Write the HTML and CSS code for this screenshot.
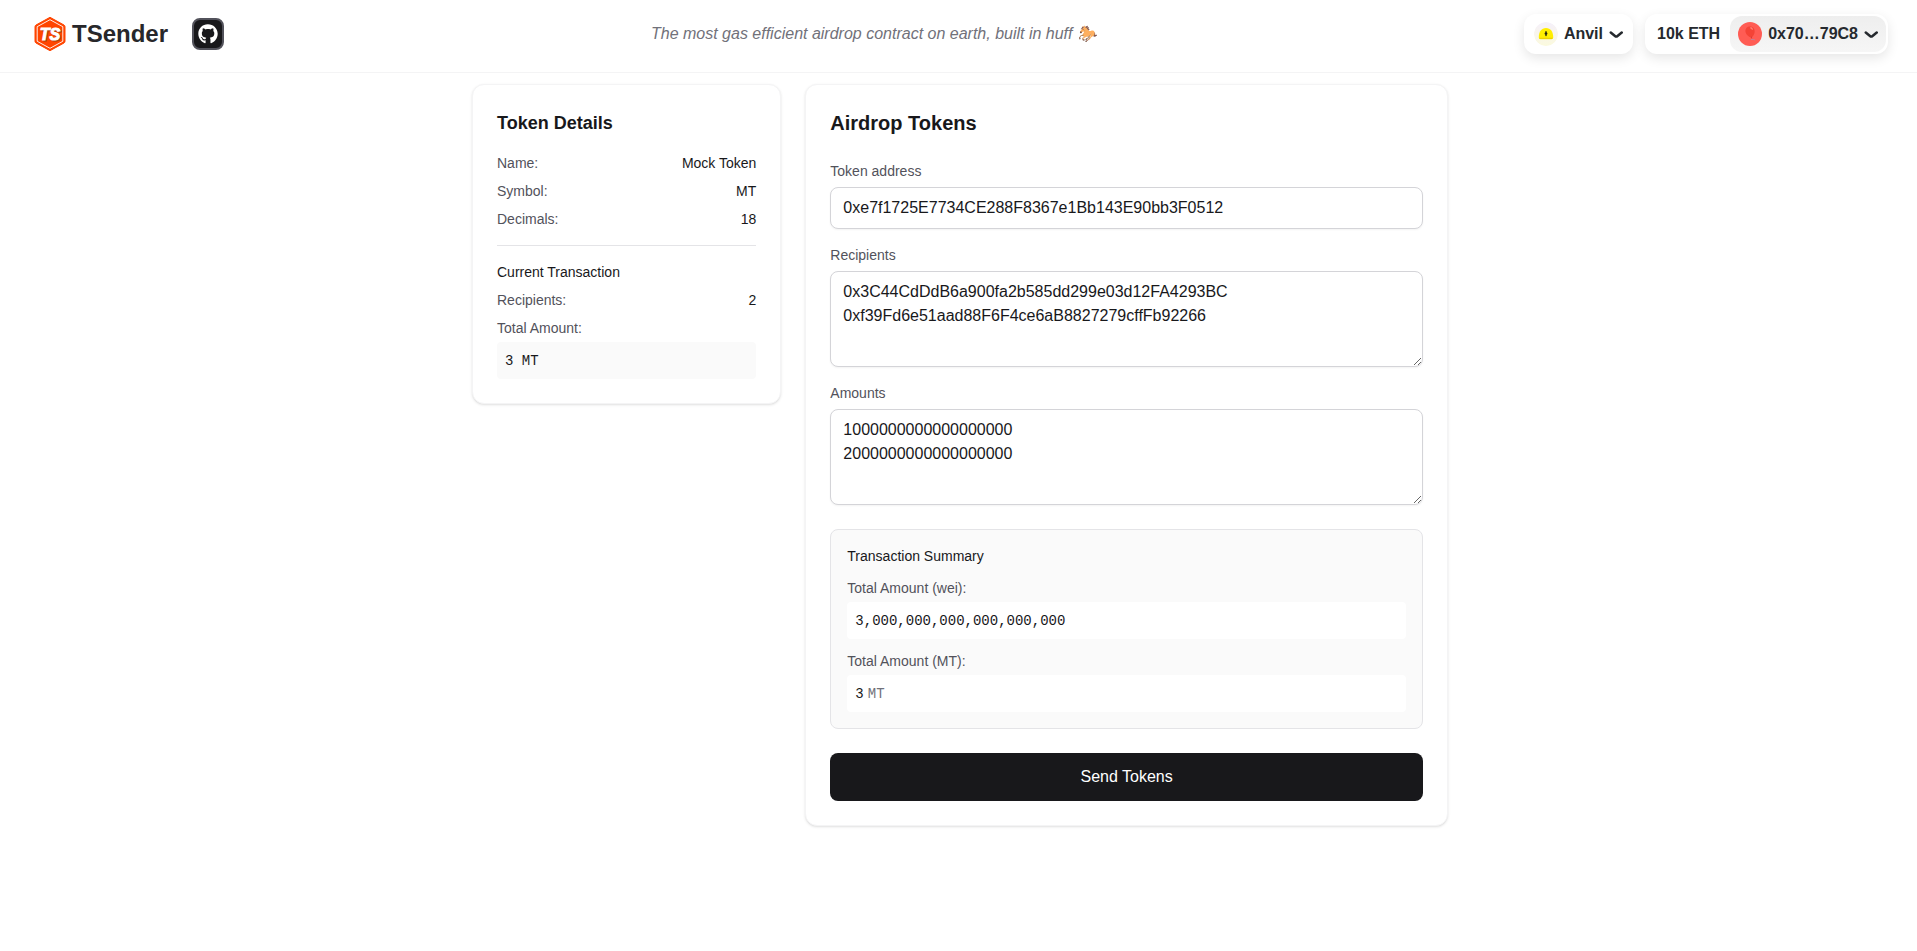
FILE: index.html
```html
<!DOCTYPE html>
<html lang="en">
<head>
<meta charset="utf-8">
<meta name="viewport" content="width=device-width, initial-scale=1">
<title>TSender</title>
<link rel="stylesheet" href="styles.css">
</head>
<body>
<header class="nav">
  <div class="nav-left">
    <a class="brand" href="#">
      <svg class="brand-logo" viewBox="0 0 36 36" aria-hidden="true">
        <path d="M18 1.300 32 9a2 2 0 0 1 1 1.700v14.600a2 2 0 0 1-1 1.700L18 34.700 4 27a2 2 0 0 1-1-1.700V10.700A2 2 0 0 1 4 9z" fill="#ff4500" stroke="#ff4500" stroke-linejoin="round"/>
        <path d="M18 3.700 30.800 10.700v14.600L18 32.300 5.200 25.300V10.700z" fill="none" stroke="#fff" stroke-width=".9" stroke-linejoin="round"/>
        <text class="logo-shade" x="19" y="25" text-anchor="middle">TS</text>
        <text class="logo-text" x="18" y="24" text-anchor="middle">TS</text>
      </svg>
      <span class="brand-name">TSender</span>
    </a>
    <a class="github" href="#" aria-label="GitHub">
      <svg viewBox="0 0 496 512" aria-hidden="true"><path fill="#fff" d="M244.8 8C106.1 8 0 113.3 0 252c0 110.9 69.8 205.8 169.5 239.2 12.8 2.300 17.300-5.600 17.300-12.100 0-6.200-.3-40.400-.3-61.400 0 0-70 15-84.700-29.800 0 0-11.400-29.100-27.800-36.600 0 0-22.900-15.700 1.600-15.400 0 0 24.900 2 38.600 25.800 21.900 38.600 58.600 27.500 72.900 20.900 2.300-16 8.800-27.100 16-33.700-55.900-6.200-112.300-14.300-112.300-110.500 0-27.500 7.600-41.300 23.600-58.900-2.600-6.500-11.100-33.300 2.600-67.900 20.900-6.500 69 27 69 27 20-5.600 41.500-8.500 62.800-8.500s42.800 2.900 62.800 8.500c0 0 48.100-33.600 69-27 13.700 34.700 5.200 61.400 2.600 67.900 16 17.700 25.800 31.500 25.800 58.900 0 96.500-58.900 104.200-114.800 110.500 9.200 7.900 17 22.900 17 46.400 0 33.700-.3 75.400-.3 83.600 0 6.500 4.600 14.400 17.300 12.100C428.200 457.800 496 362.900 496 252 496 113.300 383.500 8 244.800 8z"/></svg>
    </a>
  </div>
  <p class="tagline">The most gas efficient airdrop contract on earth, built in huff 🐎</p>
  <div class="wallet">
    <button class="pill chain" type="button">
      <svg class="badge" viewBox="0 0 24 24" aria-hidden="true">
        <defs><linearGradient id="chain-bg" x1="0" y1="0" x2="0" y2="1"><stop offset="0" stop-color="#f5f0fb"/><stop offset="1" stop-color="#fbfadd"/></linearGradient></defs>
        <circle cx="12" cy="12" r="12" fill="url(#chain-bg)"/>
        <path d="M4.800 15.500C4.800 9.500 7.500 6 12 6s7.200 3.500 7.200 9.500c0 1-.7 1.700-1.700 1.700h-11c-1 0-1.700-.7-1.700-1.700z" fill="#ffee00"/>
        <path d="M5.500 16.300h13" stroke="#eacb00" stroke-width="1"/>
        <path d="M12 9.200l1 2.300-1 2.600-1-2.600z" fill="#1a1a10" stroke="#1a1a10" stroke-width=".6"/>
      </svg>
      <span>Anvil</span>
      <svg class="chevron" viewBox="0 0 14 7" aria-hidden="true"><path d="M12.75 1.540 8.516 5.004c-.737.603-1.796.603-2.533 0L1.750 1.540"/></svg>
    </button>
    <div class="pill account-box">
      <span class="balance">10k ETH</span>
      <button class="account" type="button">
        <span class="badge avatar" aria-hidden="true">🎈</span>
        <span>0x70…79C8</span>
        <svg class="chevron" viewBox="0 0 14 7" aria-hidden="true"><path d="M12.75 1.540 8.516 5.004c-.737.603-1.796.603-2.533 0L1.750 1.540"/></svg>
      </button>
    </div>
  </div>
</header>

<main class="page">
  <div class="columns">
    <aside class="card">
      <h2 class="details-title">Token Details</h2>
      <dl class="rows">
        <div class="row"><dt>Name:</dt><dd>Mock Token</dd></div>
        <div class="row"><dt>Symbol:</dt><dd>MT</dd></div>
        <div class="row"><dt>Decimals:</dt><dd>18</dd></div>
      </dl>
      <section class="current">
        <h3 class="small-title">Current Transaction</h3>
        <dl class="rows">
          <div class="row"><dt>Recipients:</dt><dd>2</dd></div>
          <div class="stat"><dt>Total Amount:</dt><dd class="value value-grey">3 MT</dd></div>
        </dl>
      </section>
    </aside>

    <form class="card form">
      <h2 class="form-title">Airdrop Tokens</h2>
      <div class="fields">
        <div class="field">
          <label for="token">Token address</label>
          <input id="token" class="control" type="text" value="0xe7f1725E7734CE288F8367e1Bb143E90bb3F0512">
        </div>
        <div class="field">
          <label for="recipients">Recipients</label>
          <textarea id="recipients" class="control area" spellcheck="false">0x3C44CdDdB6a900fa2b585dd299e03d12FA4293BC
0xf39Fd6e51aad88F6F4ce6aB8827279cffFb92266</textarea>
        </div>
        <div class="field">
          <label for="amounts">Amounts</label>
          <textarea id="amounts" class="control area" spellcheck="false">1000000000000000000
2000000000000000000</textarea>
        </div>
      </div>
      <section class="summary">
        <h3 class="small-title">Transaction Summary</h3>
        <dl class="totals">
          <div class="stat"><dt>Total Amount (wei):</dt><dd class="value">3,000,000,000,000,000,000</dd></div>
          <div class="stat"><dt>Total Amount (MT):</dt><dd class="value">3<span class="unit">MT</span></dd></div>
        </dl>
      </section>
      <button class="send" type="button">Send Tokens</button>
    </form>
  </div>
</main>
</body>
</html>
```
FILE: styles.css
```css
*,
*::before,
*::after {
  box-sizing: border-box;
}

body,
h2,
h3,
p,
dl,
dd {
  margin: 0;
}

body {
  background: #fff;
  color: #18181b;
  font-family: "Liberation Sans", Arial, sans-serif;
  font-size: 16px;
  line-height: 24px;
}

button,
input,
textarea {
  margin: 0;
  color: inherit;
  font: inherit;
}

button {
  cursor: pointer;
}

a {
  color: inherit;
  text-decoration: none;
}

svg {
  display: block;
  flex: none;
}

/* Header */
.nav {
  display: flex;
  align-items: center;
  justify-content: space-between;
  padding: 14px 29px 18px 32px;
  border-bottom: 1px solid #f4f4f5;
}

.nav-left {
  display: flex;
  align-items: center;
  gap: 24px;
}

.brand {
  display: flex;
  align-items: center;
  gap: 4px;
}

.brand-logo {
  width: 36px;
  height: 36px;
}

.logo-text,
.logo-shade {
  font-size: 16px;
  font-weight: 700;
  font-style: italic;
  fill: #fff;
  stroke: #fff;
  stroke-width: 1px;
}

.logo-shade {
  fill: #a8420f;
  stroke: #a8420f;
}

.brand-name {
  color: #27272a;
  font-size: 24px;
  font-weight: 700;
  line-height: 32px;
}

.github {
  display: grid;
  place-items: center;
  width: 32px;
  height: 32px;
  border: 2px solid #52525b;
  border-radius: 8px;
  background: #18181b;
}

.github svg {
  width: 20px;
  height: 20px;
}

.tagline {
  color: #71717a;
  font-style: italic;
}

.wallet {
  display: flex;
  gap: 12px;
  color: #25292e;
  font-weight: 700;
}

.pill {
  display: flex;
  align-items: center;
  height: 40px;
  border: 0;
  border-radius: 12px;
  background: #fff;
  box-shadow: 0 4px 12px rgba(0, 0, 0, 0.1);
}

.chain {
  gap: 6px;
  padding: 0 10px;
}

.badge {
  width: 24px;
  height: 24px;
  border-radius: 50%;
}

.chevron {
  width: 14px;
  height: 7px;
  fill: none;
  stroke: currentColor;
  stroke-width: 2.5;
  stroke-linecap: round;
  stroke-linejoin: round;
}

.account-box {
  padding: 2px;
}

.balance {
  padding: 0 10px;
}

.account {
  display: flex;
  align-items: center;
  gap: 6px;
  height: 36px;
  padding: 0 8px;
  border: 0;
  border-radius: 12px;
  background: linear-gradient(#eee, #f6f6f6);
}

.avatar {
  display: grid;
  place-items: center;
  background: #ff5c54;
  font-size: 13px;
  line-height: 24px;
}

/* Page */
.page {
  padding: 11px 0 24px 3px;
}

.columns {
  display: grid;
  grid-template-columns: repeat(3, minmax(0, 1fr));
  align-items: start;
  gap: 24px;
  max-width: 976px;
  margin: 0 auto;
}

.card {
  padding: 24px;
  border: 1px solid #f4f4f5;
  border-radius: 12px;
  background: #fff;
  box-shadow: 0 1px 3px rgba(0, 0, 0, 0.1), 0 1px 2px -1px rgba(0, 0, 0, 0.1);
}

.form {
  grid-column: span 2;
}

.details-title {
  margin-bottom: 16px;
  font-size: 18px;
  line-height: 28px;
}

.form-title {
  margin-bottom: 24px;
  font-size: 20px;
  line-height: 28px;
}

.small-title {
  font-size: 14px;
  font-weight: 400;
  line-height: 20px;
}

.rows {
  display: grid;
  gap: 8px;
  font-size: 14px;
  line-height: 20px;
}

.row {
  display: flex;
  justify-content: space-between;
}

dt,
label {
  color: #52525b;
}

.current {
  display: grid;
  gap: 8px;
  margin-top: 16px;
  padding-top: 16px;
  border-top: 1px solid #e4e4e7;
}

.stat {
  display: grid;
  gap: 4px;
}

.value {
  padding: 9px 8px 8px;
  border-radius: 4px;
  background: #fff;
  font-family: "Liberation Mono", "Courier New", monospace;
  line-height: 20px;
}

.value-grey {
  background: #fafafa;
}

.unit {
  margin-left: 4px;
  color: #71717a;
}

.fields {
  display: grid;
  gap: 16px;
}

.field {
  display: grid;
  gap: 6px;
}

label {
  font-size: 14px;
  line-height: 20px;
}

.control {
  display: block;
  width: 100%;
  padding: 8px 12px;
  border: 1px solid #d4d4d8;
  border-radius: 8px;
  background: #fff;
  box-shadow: 0 1px 2px rgba(0, 0, 0, 0.05);
  line-height: 24px;
}

.area {
  height: 96px;
  resize: vertical;
}

.summary {
  display: grid;
  gap: 12px;
  margin: 24px 0;
  padding: 16px;
  border: 1px solid #e4e4e7;
  border-radius: 8px;
  background: #fafafa;
}

.totals {
  display: grid;
  gap: 12px;
  font-size: 14px;
  line-height: 20px;
}

.send {
  display: block;
  width: 100%;
  padding: 12px 16px;
  border: 0;
  border-radius: 8px;
  background: #18181b;
  color: #fff;
}
```
